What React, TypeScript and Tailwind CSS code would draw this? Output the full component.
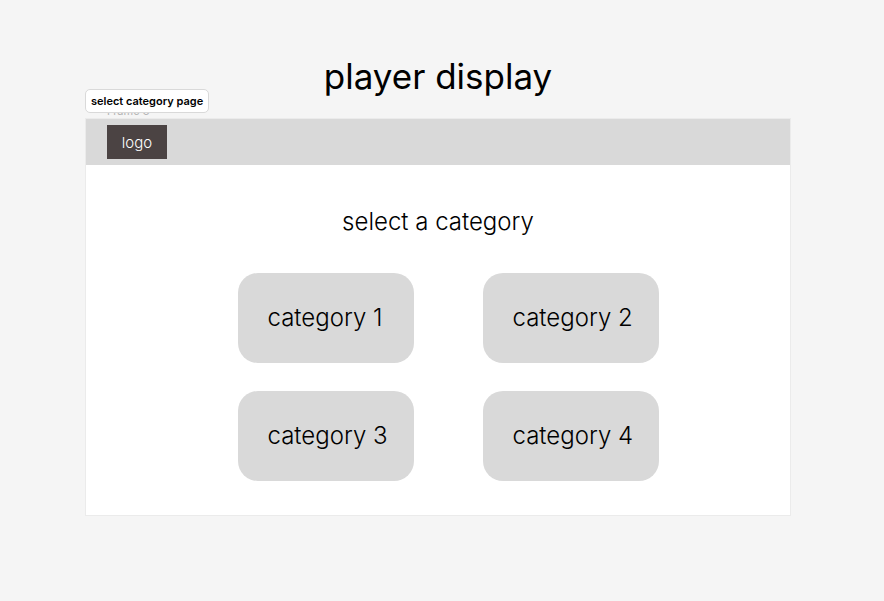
const categories = ["category 1", "category 2", "category 3", "category 4"];

export default function App() {
  return (
    <div className="min-h-screen bg-[#f5f5f5] pt-[54px] pr-[94px] pl-[86px] font-[Inter,sans-serif] text-black">
      <h1 className="text-center text-[35px] leading-[44px]">player display</h1>
      <div className="relative mt-[21px]">
        <span className="absolute -top-[15px] left-[21px] text-[11px] leading-[14px] text-[#b3b3b3]">Frame 3</span>
        <span className="absolute -top-[30px] -left-px rounded-[5px] border border-[#d9d9d9] bg-white px-[5px] text-[11px] leading-[22px] font-semibold whitespace-nowrap">
          select category page
        </span>
        <main className="bg-white pb-[34px] outline outline-[#ebebeb]">
          <header className="flex h-[46px] items-center bg-[#d9d9d9] px-[21px]">
            <a href="#" className="flex h-[34px] w-[60px] items-center justify-center bg-[#4b4343] pt-px text-[15px] leading-[18px] font-light text-white">logo</a>
          </header>
          <h2 className="mt-[42px] text-center text-[24px] leading-[29px] font-light">select a category</h2>
          <div className="mt-[37px] ml-5 grid grid-cols-[176px_176px] justify-center gap-x-[69px] gap-y-7">
            {categories.map((name) => (
              <button key={name} type="button" className="h-[90px] rounded-[20px] bg-[#d9d9d9] pb-0.5 pl-[30px] text-left text-[24px] leading-[29px] font-light whitespace-nowrap">
                {name}
              </button>
            ))}
          </div>
        </main>
      </div>
    </div>
  );
}
